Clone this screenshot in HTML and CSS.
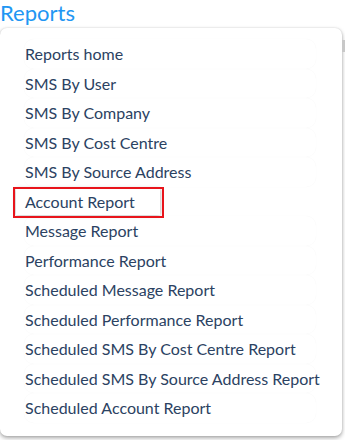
FILE: index.html
```html
<!DOCTYPE html>
<html>
<head>
<meta charset="utf-8">
<link rel="stylesheet" href="styles.css">
</head>
<body>
<h1 class="title">Reports</h1>
<div class="menu">
  <ul class="list">
    <li class="item">Reports home</li>
    <li class="item">SMS By User</li>
    <li class="item">SMS By Company</li>
    <li class="item">SMS By Cost Centre</li>
    <li class="item">SMS By Source Address</li>
    <li class="item item-marked">Account Report</li>
    <li class="item">Message Report</li>
    <li class="item">Performance Report</li>
    <li class="item">Scheduled Message Report</li>
    <li class="item">Scheduled Performance Report</li>
    <li class="item">Scheduled SMS By Cost Centre Report</li>
    <li class="item">Scheduled SMS By Source Address Report</li>
    <li class="item">Scheduled Account Report</li>
  </ul>
  <div class="scroll-thumb"></div>
</div>
</body>
</html>
```
FILE: styles.css
```css
html, body {
  margin: 0;
  padding: 0;
  background: #fff;
  overflow: hidden;
}
body {
  font-family: Lato, "Open Sans", sans-serif;
  width: 345px;
  height: 440px;
}
.title {
  margin: 0;
  font-size: 22px;
  font-weight: 400;
  line-height: 25px;
  color: #2196f3;
  padding-left: 0;
}
.menu {
  position: relative;
  margin-top: 3px;
  width: 342px;
  height: 408px;
  box-sizing: border-box;
  background: #fff;
  border-radius: 7px;
  box-shadow: 0 2px 4px rgba(0,0,0,0.35), 0 0 2px rgba(0,0,0,0.12);
  padding: 11px 0 0 0;
}
.list {
  list-style: none;
  margin: 0;
  padding: 0;
}
.item {
  position: relative;
  margin-left: 24px;
  width: 292px;
  height: 29.5px;
  line-height: 29.5px;
  padding-left: 1px;
  box-sizing: border-box;
  font-size: 16px;
  color: #2b4262;
  border-radius: 10px;
  box-shadow: 0 0 1px rgba(0,0,0,0.06);
  white-space: nowrap;
}
.item-marked {
  box-shadow: none;
}
.item-marked::before {
  content: "";
  position: absolute;
  left: -8px;
  top: 2px;
  width: 144px;
  height: 26px;
  box-shadow: 0 0 4px rgba(0,0,0,0.35);
}
.item-marked::after {
  content: "";
  position: absolute;
  left: -11px;
  top: 0.5px;
  width: 151px;
  height: 31px;
  box-sizing: border-box;
  border: 2px solid #e8141b;
}
.scroll-thumb {
  position: absolute;
  right: -3px;
  top: 12px;
  width: 3px;
  height: 12px;
  background: #c8c8c8;
}
```
